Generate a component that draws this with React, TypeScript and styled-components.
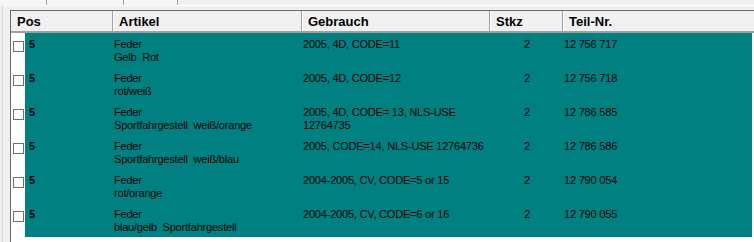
import React from 'react';
import styled, { createGlobalStyle } from 'styled-components';

const Global = createGlobalStyle`
  html, body { margin: 0; padding: 0; background: #f0f0f0; overflow: hidden; }
  body { font-family: "Liberation Sans", Arial, sans-serif; }
`;

const Window = styled.div`
  width: 754px;
  height: 242px;
  overflow: hidden;
  background: #f0f0f0;
  display: flex;
  flex-direction: column;
`;

const TabStrip = styled.div`
  display: flex;
  height: 5px;
  flex: none;
`;

const Tab = styled.div<{ $w: number }>`
  width: ${p => p.$w}px;
  flex: none;
  background: #f7f7f7;
  border-right: 1px solid #a0a0a0;
`;

const Panel = styled.div`
  flex: 1;
  min-height: 0;
  margin-left: 2px;
  border-top: 1px solid #ffffff;
  border-left: 1px solid #dcdcdc;
  padding: 4px 0 0 7px;
  display: flex;
  flex-direction: column;
`;

const List = styled.div`
  flex: 1;
  min-height: 0;
  background: #ffffff;
  border-top: 1px solid #696969;
  border-left: 1px solid #696969;
  display: flex;
  flex-direction: column;
`;

const Header = styled.div`
  display: grid;
  grid-template-columns: 101px 189px 188px 73px 1fr;
  height: 22px;
  box-sizing: border-box;
  background: #f0f0f0;
  border-bottom: 2px solid #a0a0a0;
  flex: none;
`;

const HeaderCell = styled.div<{ $first?: boolean }>`
  padding: 2px 0 0 ${p => (p.$first ? 6 : 6)}px;
  line-height: 18px;
  font-size: 13px;
  font-weight: bold;
  color: #000;
  border-left: ${p => (p.$first ? 'none' : '1px solid #a0a0a0')};
  box-shadow: ${p => (p.$first ? 'none' : 'inset 1px 0 0 #ffffff')};
  white-space: nowrap;
`;

const Row = styled.div`
  display: flex;
  height: 34px;
  flex: none;
`;

const CheckArea = styled.div`
  width: 14px;
  flex: none;
  background: #ffffff;
`;

const CheckBox = styled.div`
  width: 11px;
  height: 11px;
  box-sizing: border-box;
  border: 1px solid #707070;
  background: #ffffff;
  margin: 8px 0 0 2px;
`;

const Body = styled.div`
  display: grid;
  grid-template-columns: 87px 189px 188px 73px 190px;
  background: #008080;
  flex: none;
`;

const Cell = styled.div<{ $align?: 'left' | 'right'; $bold?: boolean; $pl?: number; $pr?: number }>`
  padding: 5px ${p => p.$pr ?? 0}px 0 ${p => p.$pl ?? 2}px;
  font-size: 11px;
  line-height: 13px;
  letter-spacing: ${p => (p.$bold ? '0' : '-0.2px')};
  font-weight: ${p => (p.$bold ? 'bold' : 'normal')};
  text-align: ${p => p.$align ?? 'left'};
  color: #000000;
  white-space: pre;
  overflow: hidden;
`;

type Item = { pos: string; artikel: string; gebrauch: string; stkz: string; teil: string };

const items: Item[] = [
  { pos: '5', artikel: 'Feder\nGelb  Rot', gebrauch: '2005, 4D, CODE=11', stkz: '2', teil: '12 756 717' },
  { pos: '5', artikel: 'Feder\nrot/weiß', gebrauch: '2005, 4D, CODE=12', stkz: '2', teil: '12 756 718' },
  { pos: '5', artikel: 'Feder\nSportfahrgestell  weiß/orange', gebrauch: '2005, 4D, CODE= 13, NLS-USE\n12764735', stkz: '2', teil: '12 786 585' },
  { pos: '5', artikel: 'Feder\nSportfahrgestell  weiß/blau', gebrauch: '2005, CODE=14, NLS-USE 12764736', stkz: '2', teil: '12 786 586' },
  { pos: '5', artikel: 'Feder\nrot/orange', gebrauch: '2004-2005, CV, CODE=5 or 15', stkz: '2', teil: '12 790 054' },
  { pos: '5', artikel: 'Feder\nblau/gelb  Sportfahrgestell', gebrauch: '2004-2005, CV, CODE=6 or 16', stkz: '2', teil: '12 790 055' },
];

export default function App() {
  return (
    <>
      <Global />
      <Window>
        <TabStrip>
          <Tab $w={46} />
          <Tab $w={76} />
          <Tab $w={53} />
        </TabStrip>
        <Panel>
          <List>
            <Header>
              <HeaderCell $first>Pos</HeaderCell>
              <HeaderCell>Artikel</HeaderCell>
              <HeaderCell>Gebrauch</HeaderCell>
              <HeaderCell>Stkz</HeaderCell>
              <HeaderCell>Teil-Nr.</HeaderCell>
            </Header>
            {items.map((it, i) => (
              <Row key={i}>
                <CheckArea>
                  <CheckBox />
                </CheckArea>
                <Body>
                  <Cell $bold $pl={4}>{it.pos}</Cell>
                  <Cell>{it.artikel}</Cell>
                  <Cell>{it.gebrauch}</Cell>
                  <Cell $align="right" $pr={32}>{it.stkz}</Cell>
                  <Cell>{it.teil}</Cell>
                </Body>
              </Row>
            ))}
          </List>
        </Panel>
      </Window>
    </>
  );
}
